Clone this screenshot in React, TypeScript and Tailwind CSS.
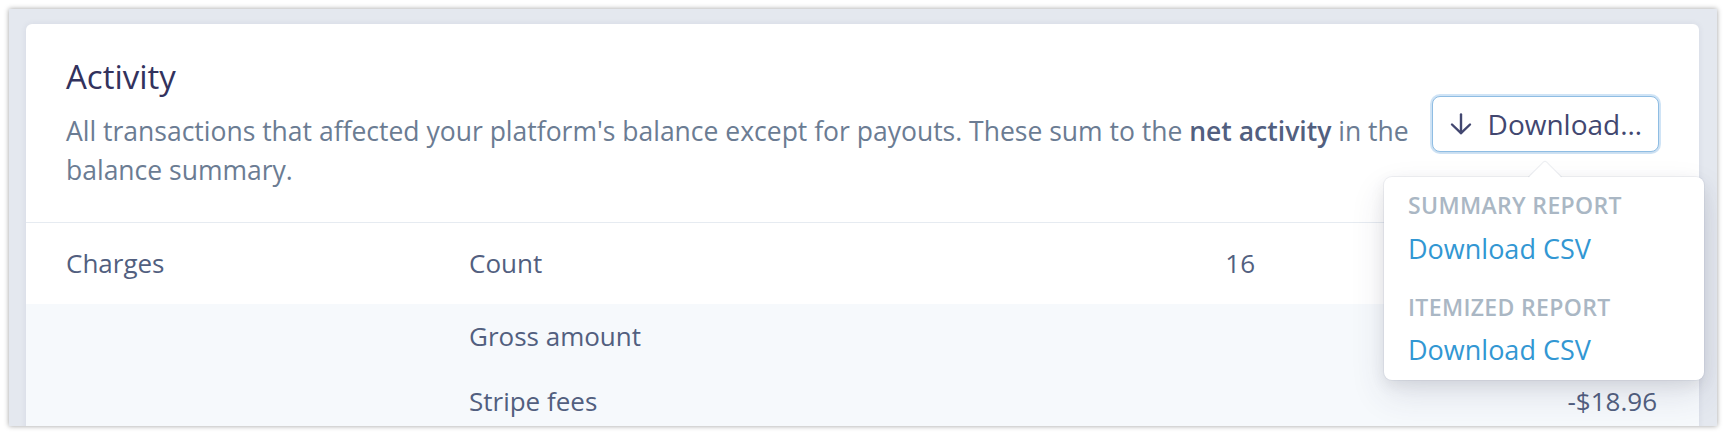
import React from 'react';

const rows = [
  { group: 'Charges', label: 'Count', count: '16', amount: '', shaded: false },
  { group: '', label: 'Gross amount', count: '', amount: '', shaded: true },
  { group: '', label: 'Stripe fees', count: '', amount: '-$18.96', shaded: true },
];

function ArrowDownIcon() {
  return (
    <svg width="22" height="22" viewBox="0 0 22 22" fill="none" stroke="currentColor" strokeWidth="2.4" strokeLinecap="round" strokeLinejoin="round">
      <path d="M11 1.5V20" />
      <path d="M2 11.5L11 20.2L20 11.5" />
    </svg>
  );
}

function DownloadMenu() {
  return (
    <div className="absolute right-[-45px] top-[81px] w-[320px] rounded-[8px] bg-white px-6 pt-[14px] pb-[12px] shadow-[0_0_0_1px_rgba(136,152,170,0.12),0_15px_35px_rgba(50,50,93,0.12),0_5px_15px_rgba(0,0,0,0.08)]">
      {/* caret */}
      <div className="absolute left-[149px] top-[-11px] h-6 w-6 rotate-45 rounded-tl-[3px] bg-white shadow-[-1px_-1px_0_rgba(136,152,170,0.14)]" />
      <div className="relative">
        <div className="text-[23px] leading-[28px] font-semibold uppercase tracking-[0.015em] text-[#aab7c4]">Summary report</div>
        <div className="mt-[12px] text-[27px] leading-[36px] text-[#3297d3]">Download CSV</div>
        <div className="mt-[26px] text-[23px] leading-[28px] font-semibold uppercase tracking-[0.015em] text-[#aab7c4]">Itemized report</div>
        <div className="mt-[11px] text-[27px] leading-[36px] text-[#3297d3]">Download CSV</div>
      </div>
    </div>
  );
}

export default function App() {
  return (
    <div className="h-[436px] w-[1726px] bg-white pt-[9px] pl-[9px] font-['Open_Sans',sans-serif]">
      <div className="h-[417px] w-[1708px] overflow-hidden bg-[#e4e8ef] pt-[15px] pl-[17px] pr-[18px] shadow-[0_0_5px_rgba(0,0,0,0.38)]">
        <div className="rounded-t-[6px] bg-white shadow-[0_0_6px_rgba(50,50,93,0.08)]">
          {/* Header */}
          <div className="flex items-center border-b border-[#e6ebf1] px-10 pt-[34px] pb-[32px]">
            <div className="flex-1 pr-[10px]">
              <h2 className="text-[33px] leading-[38px] font-medium text-[#32325d]">Activity</h2>
              <p className="mt-[16px] text-[26.5px] leading-[39px] text-[#6b7c93]">
                All transactions that affected your platform's balance except for payouts. These sum to the{' '}
                <span className="font-semibold text-[#525f7f]">net activity</span> in the balance summary.
              </p>
            </div>
            <div className="relative">
              <button className="flex h-[56px] items-center gap-[16px] rounded-[8px] border border-[#8fbde3] bg-white pl-[17px] pr-[16px] text-[28px] font-medium text-[#424770] shadow-[0_0_0_2px_rgba(150,196,236,0.45),0_1px_2px_rgba(0,0,0,0.06)]">
                <ArrowDownIcon />
                <span>Download…</span>
              </button>
              <DownloadMenu />
            </div>
          </div>

          {/* Rows */}
          <div className="text-[26px] text-[#525f7f]">
            {rows.map((r, i) => (
              <div
                key={i}
                className={`flex items-center pl-10 pr-[42px] ${r.shaded ? 'h-[65px] bg-[#f6f9fc]' : 'h-[81px]'}`}
              >
                <div className="w-[403px] font-medium">{r.group}</div>
                <div className="flex-1">{r.label}</div>
                <div className="w-[100px] text-right">{r.count}</div>
                <div className="w-[402px] text-right">{r.amount}</div>
              </div>
            ))}
          </div>
        </div>
      </div>
    </div>
  );
}
